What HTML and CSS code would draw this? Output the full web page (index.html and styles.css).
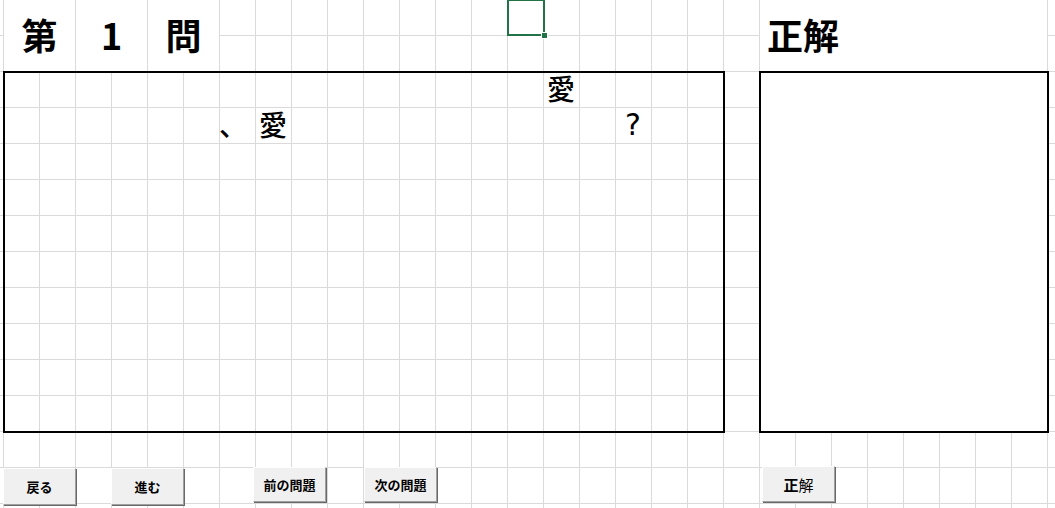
FILE: index.html
```html
<!DOCTYPE html>
<html lang="ja">
<head>
<meta charset="utf-8">
<title>第1問</title>
<link rel="stylesheet" href="styles.css">
</head>
<body>
<div class="sheet">
  <div class="title-cell t-dai">第</div>
  <div class="title-cell t-num">1</div>
  <div class="title-cell t-mon">問</div>
  <div class="title-cell t-answer">正解</div>

  <div class="selection"><span class="handle"></span></div>

  <div class="question-box"></div>
  <div class="answer-box"></div>

  <div class="q-char c-ai1">愛</div>
  <div class="q-char c-ten">、</div>
  <div class="q-char c-ai2">愛</div>
  <div class="q-char c-q">?</div>

  <button class="btn b-back">戻る</button>
  <button class="btn b-next">進む</button>
  <button class="btn b-prevq">前の問題</button>
  <button class="btn b-nextq">次の問題</button>
  <button class="btn b-answer"><b>正</b>解</button>
</div>
</body>
</html>
```
FILE: styles.css
```css
html, body {
  margin: 0;
  padding: 0;
  width: 1055px;
  height: 508px;
  overflow: hidden;
}
body {
  background-color: #fff;
  background-image:
    linear-gradient(to right, #dadada 0, #dadada 1px, transparent 1px),
    linear-gradient(to bottom, #dadada 0, #dadada 1px, transparent 1px);
  background-size: 36px 36px;
  background-position: 3px -1px;
  font-family: "Noto Sans CJK JP", "Noto Sans", sans-serif;
  color: #000;
}
.sheet {
  display: grid;
  grid-template-columns: repeat(30, 36px);
  grid-template-rows: repeat(14, 36px);
  margin-left: 3px;
  margin-top: -1px;
}
.title-cell {
  grid-row: 1 / 3;
  background: #fff;
  border-left: 1px solid #dadada;
  box-sizing: border-box;
  display: flex;
  align-items: center;
  justify-content: center;
  font-size: 36px;
  font-weight: 700;
  line-height: 1;
  padding-bottom: 3px;
}
.t-dai { grid-column: 1 / 3; }
.t-num { grid-column: 3 / 5; }
.t-mon { grid-column: 5 / 7; }
.t-answer {
  grid-column: 22 / 30;
  justify-content: flex-start;
  padding-left: 7px;
  border-right: 1px solid #dadada;
  margin-right: -1px;
}
.selection {
  grid-column: 15;
  grid-row: 1;
  position: relative;
  border: 2px solid #217346;
  box-sizing: border-box;
  margin-right: -2px;
  margin-bottom: -1px;
}
.handle {
  position: absolute;
  right: -4px;
  bottom: -4px;
  width: 5px;
  height: 5px;
  background: #217346;
  outline: 1px solid #fff;
}
.question-box {
  grid-column: 1 / 21;
  grid-row: 3 / 13;
  border: 2px solid #000;
  box-sizing: border-box;
  margin-right: -2px;
  margin-bottom: -2px;
}
.answer-box {
  grid-column: 22 / 30;
  grid-row: 3 / 13;
  border: 2px solid #000;
  background: #fff;
  box-sizing: border-box;
  margin-right: -2px;
  margin-bottom: -2px;
}
.q-char {
  display: flex;
  align-items: center;
  justify-content: center;
  font-size: 28px;
  font-weight: 500;
  line-height: 1;
  padding-bottom: 3px;
}
.c-ai1 { grid-column: 16; grid-row: 3; }
.c-ten { grid-column: 7; grid-row: 4; justify-content: flex-start; }
.c-ai2 { grid-column: 8; grid-row: 4; }
.c-q {
  grid-column: 18;
  grid-row: 4;
  font-family: "DejaVu Sans", "Liberation Sans", sans-serif;
  font-weight: 400;
  font-size: 30px;
  padding-bottom: 0;
}

.btn {
  grid-row: 14;
  justify-self: start;
  align-self: start;
  width: 73px;
  height: 37px;
  padding: 0;
  background: #f0f0f0;
  border: 1px solid;
  border-color: #fff #a0a0a0 #a0a0a0 #fff;
  box-shadow: 1px 1px 0 #696969;
  box-sizing: border-box;
  font-family: "Noto Sans CJK JP", "Noto Sans", sans-serif;
  font-size: 13px;
  font-weight: 700;
  color: #000;
  line-height: 1;
}
.b-back { grid-column: 1 / 4; margin-top: 1px; }
.b-next { grid-column: 4 / 7; margin-top: 1px; }
.b-prevq { grid-column: 7 / 10; margin-left: 34px; height: 35px; }
.b-nextq { grid-column: 10 / 13; margin-left: 37px; height: 35px; }
.b-answer {
  grid-column: 22 / 25;
  margin-left: 3px;
  margin-top: -1px;
  height: 36px;
  font-size: 15px;
  font-weight: 400;
}
.b-answer b { font-weight: 700; }
```
